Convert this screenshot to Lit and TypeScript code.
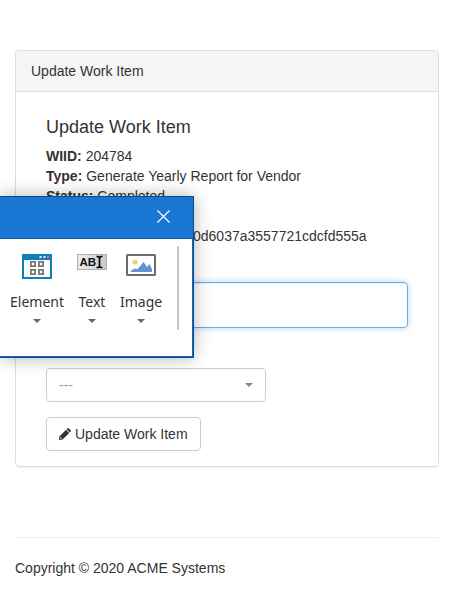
import { LitElement, html, css, svg } from "lit";
import { customElement } from "lit/decorators.js";

const elementIcon = svg`<svg width="30" height="25" viewBox="0 0 30 25" aria-hidden="true">
  <rect width="30" height="25" rx="0.5" fill="#127db8"/>
  <rect x="2" y="6" width="26" height="17" fill="#fff"/>
  <path d="M17.500 2h2v2h-2zM21.500 2h2v2h-2z" fill="#dff0fa"/>
  <path d="M25 2h2v2h-2z" fill="#f0607a"/>
  <path d="M8.900 7.900h4.200v4.200h-4.200zM16.900 7.900h4.200v4.200h-4.200zM8.900 15.900h4.200v4.200h-4.200zM16.900 15.900h4.200v4.200h-4.200z" fill="none" stroke="#777" stroke-width="1.800"/>
</svg>`;

const textIcon = svg`<svg width="30" height="16" viewBox="0 0 30 16" aria-hidden="true">
  <defs><linearGradient id="g"><stop offset="0" stop-color="#ededed"/><stop offset="1" stop-color="#c9c9c9"/></linearGradient></defs>
  <rect x="0.500" y="0.500" width="29" height="15" fill="url(#g)" stroke="#b1b1a9"/>
  <text x="2.500" y="12" font-family="Liberation Sans, Arial, sans-serif" font-size="11.500" font-weight="700" fill="#111">AB</text>
  <path d="M19.500 2.500h1.500l1.500 1 1.500-1h1.500M22.500 3.500v9M19.500 13.500h1.500l1.500-1 1.500 1h1.500" fill="none" stroke="#000" stroke-width="1.700"/>
</svg>`;

const imageIcon = svg`<svg width="30" height="22" viewBox="0 0 30 22" aria-hidden="true">
  <rect x="1" y="1" width="28" height="20" rx="0.500" fill="#fff" stroke="#6d6d6d" stroke-width="2"/>
  <circle cx="9" cy="8" r="2.600" fill="#ecd27a"/>
  <path d="M4 18l2.500-2.500 3-1 2 .8 6-7.300 3.500 5 2.300-3 2.700 5v3z" fill="#6792cf"/>
</svg>`;

@customElement("app-root")
export class AppRoot extends LitElement {
  static styles = css`
    :host {
      display: block;
      position: relative;
      padding: 50px 15px 24px;
      background: #fff;
      color: #333;
      font: 14px/20px "Liberation Sans", Arial, sans-serif;
    }
    * { box-sizing: border-box; }
    .panel {
      border: 1px solid #ddd;
      border-radius: 4px;
      box-shadow: 0 1px 1px rgba(0, 0, 0, 0.05);
    }
    .heading {
      padding: 10px 15px;
      border-bottom: 1px solid #ddd;
      border-radius: 3px 3px 0 0;
      background: #f5f5f5;
    }
    .body { padding: 25px 30px 15px; }
    h4 { margin: 0 0 9px; font-size: 18px; line-height: 20px; font-weight: 400; }
    p { margin: 0; }
    .hash { margin: 20px 0 0 147px; }
    .comment {
      display: block;
      width: 100%;
      height: 46px;
      margin: 36px 0 40px;
      padding: 10px 12px;
      border: 1px solid #66afe9;
      border-radius: 4px;
      outline: 0;
      resize: none;
      background: #fff;
      font: inherit;
      box-shadow: inset 0 1px 1px rgba(0, 0, 0, 0.075), 0 0 6px rgba(102, 175, 233, 0.5);
    }
    .picker {
      display: grid;
      grid-template-columns: 1fr 21px;
      align-items: center;
      width: 220px;
      max-width: 100%;
      margin-bottom: 15px;
    }
    .picker select {
      grid-area: 1 / 1 / 2 / 3;
      appearance: none;
      height: 34px;
      padding: 0 12px;
      border: 1px solid #ccc;
      border-radius: 4px;
      background: #fff;
      color: #999;
      font: inherit;
    }
    .caret {
      width: 8px;
      height: 4px;
      background: currentColor;
      clip-path: polygon(0 0, 100% 0, 50% 100%);
    }
    .picker .caret { grid-area: 1 / 2; color: #888; pointer-events: none; z-index: 1; }
    .update {
      display: inline-flex;
      align-items: center;
      gap: 4px;
      height: 34px;
      padding: 0 12px;
      border: 1px solid #ccc;
      border-radius: 4px;
      background: #fff;
      color: #333;
      font: inherit;
      vertical-align: top;
    }
    footer { margin-top: 70px; padding-top: 20px; border-top: 1px solid #eee; }
    .recorder {
      position: absolute;
      z-index: 2;
      top: 196px;
      left: 0;
      width: 194px;
      height: 162px;
      border: solid #0d4a8c;
      border-width: 1px 1px 1px 0;
      background: #fff;
      box-shadow: inset -1px -1px #1168bd, 0 0 16px rgba(0, 0, 0, 0.3);
    }
    .titlebar {
      display: flex;
      justify-content: flex-end;
      align-items: center;
      height: 42px;
      padding: 0 22px 2px 0;
      border-bottom: 1px solid #0f59a5;
      background: #1a76d3;
    }
    .recorder button { border: 0; background: none; padding: 0; }
    .close { display: flex; }
    .tools {
      display: flex;
      padding: 7px 14px 0 10px;
      gap: 13px;
    }
    .tool {
      display: flex;
      flex-direction: column;
      align-items: center;
      height: 84px;
      color: #333;
      font: 14px/20px "Noto Sans", "Open Sans", sans-serif;
    }
    .pic { height: 38px; margin-top: 8px; }
    .pic svg { display: block; }
    .tool .caret { margin-top: 7px; color: #666; }
    .rule { flex: none; width: 2px; height: 84px; margin-left: auto; background: #c8c8c8; }
  `;

  private tool(label: string, icon: unknown) {
    return html`<button class="tool" type="button">
      <span class="pic">${icon}</span><span>${label}</span><span class="caret"></span>
    </button>`;
  }

  render() {
    return html`
      <main class="panel">
        <div class="heading">Update Work Item</div>
        <div class="body">
          <h4>Update Work Item</h4>
          <p><b>WIID:</b> 204784</p>
          <p><b>Type:</b> Generate Yearly Report for Vendor</p>
          <p><b>Status:</b> Completed</p>
          <p class="hash">0d6037a3557721cdcfd555a</p>
          <textarea class="comment" aria-label="Comment"></textarea>
          <div class="picker">
            <select aria-label="Status"><option>---</option></select>
            <span class="caret"></span>
          </div>
          <button class="update" type="button">
            <svg width="12" height="12" viewBox="0 0 12 12" aria-hidden="true">
              <path d="M8.300.5Q9.100-.3 9.900.5L11.500 2.100Q12.300 2.900 11.500 3.700L10.800 4.400 7.600 1.200zM7 1.800L10.200 5 3.600 11.600 0 12 .4 8.400zM1.400 9.300L1.200 10.200l.6.600.9-.2.200-.5-.7-.1-.1-.7z" fill="#333" fill-rule="evenodd"/>
            </svg>
            <span>Update Work Item</span>
          </button>
        </div>
      </main>
      <footer>Copyright © 2020 ACME Systems</footer>
      <section class="recorder" aria-label="Recorder">
        <div class="titlebar">
          <button class="close" type="button" aria-label="Close">
            <svg width="15" height="15" viewBox="0 0 15 15"><path d="M1.500 1.500l12 12M13.500 1.500l-12 12" stroke="#fff" stroke-width="1.200"/></svg>
          </button>
        </div>
        <div class="tools">
          ${this.tool("Element", elementIcon)}
          ${this.tool("Text", textIcon)}
          ${this.tool("Image", imageIcon)}
          <span class="rule"></span>
        </div>
      </section>
    `;
  }
}
